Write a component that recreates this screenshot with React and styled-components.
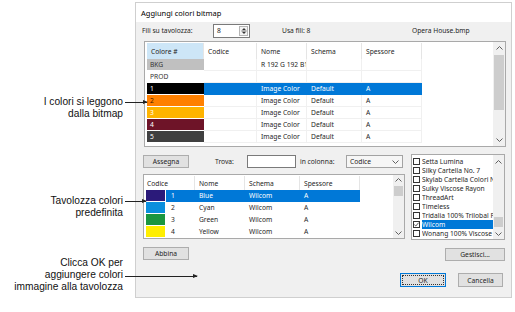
import React from 'react'
import styled, { createGlobalStyle, css } from 'styled-components'

const GlobalStyle = createGlobalStyle`
  html, body { margin: 0; padding: 0; background: #fff; }
  body { font-family: "Noto Sans", "Open Sans", sans-serif; color: #1e1e1e; }
  * { box-sizing: border-box; }
`

const bitmapRows = [
  { key: 'BKG', swatch: '#c0c0c0', ink: '#333', nome: 'R 192 G 192 B192' },
  { key: 'PROD', swatch: '#fff', ink: '#333' },
  { key: '1', swatch: '#000', ink: '#fff', nome: 'Image Color', schema: 'Default', spessore: 'A', selected: true },
  { key: '2', swatch: '#ff8000', ink: '#3a1c00', nome: 'Image Color', schema: 'Default', spessore: 'A' },
  { key: '3', swatch: '#ffb400', ink: '#fff', nome: 'Image Color', schema: 'Default', spessore: 'A' },
  { key: '4', swatch: '#6e1428', ink: '#fff', nome: 'Image Color', schema: 'Default', spessore: 'A' },
  { key: '5', swatch: '#404040', ink: '#fff', nome: 'Image Color', schema: 'Default', spessore: 'A' },
]

const paletteRows = [
  { code: '1', swatch: '#2b1a7a', nome: 'Blue', selected: true },
  { code: '2', swatch: '#0a8fdd', nome: 'Cyan' },
  { code: '3', swatch: '#1a9640', nome: 'Green' },
  { code: '4', swatch: '#ffee00', nome: 'Yellow' },
]

const threadCharts = [
  'Setta Lumina',
  'Silky Cartella No. 7',
  'Skylab Cartella Colori N\u00b0 1',
  'Sulky Viscose Rayon',
  'ThreadArt',
  'Timeless',
  'Tridalia 100% Trilobal Polyester',
  'Wilcom',
  'Wonang 100% Viscose (Rayon)',
]

const UPPER_COLS = '57px 53px 50px 55px 60px 1fr'
const LOWER_COLS = '20px 29px 50px 55px 60px 1fr'

const Chevron = ({ down }) => (
  <svg width="7" height="4" viewBox="0 0 7 4">
    <polyline
      points={down ? '0.5,0.5 3.5,3.5 6.5,0.5' : '0.5,3.5 3.5,0.5 6.5,3.5'}
      fill="none"
      stroke="#606060"
      strokeWidth="1"
    />
  </svg>
)

const Scrollbar = ({ w, btn, top, h }) => (
  <ScrollTrack $w={w}>
    <ScrollButton $h={btn}><Chevron /></ScrollButton>
    <Thumb $w={w - 2} $top={top} $h={h} />
    <ScrollButton $h={btn} $push><Chevron down /></ScrollButton>
  </ScrollTrack>
)

const App = () => {
  return (
    <>
      <GlobalStyle />
      <Page>
        <NoteColumn>
          <Note $top={94}>
            I colori si leggono<br />dalla bitmap
            <Leader $y={6} $len={22} />
          </Note>
          <Note $top={75}>
            Tavolozza colori<br />predefinita
            <Leader $y={6} $len={21} />
          </Note>
          <Note $top={38}>
            Clicca OK per<br />aggiungere colori<br />immagine alla tavolozza
            <Leader $y={19} $len={72} />
          </Note>
        </NoteColumn>

        <Dialog>
          <TitleBar>Aggiungi colori bitmap</TitleBar>
          <Body>
            <TopRow>
              <Label $w={71}>Fili su tavolozza:</Label>
              <Spin>
                <SpinValue>8</SpinValue>
                <SpinButtons>
                  <svg width="7" height="9" viewBox="0 0 7 9">
                    <polygon points="1,3.5 3.5,1 6,3.5" fill="#333" />
                    <line x1="0" y1="4.5" x2="7" y2="4.5" stroke="#999" />
                    <polygon points="1,5.5 3.5,8 6,5.5" fill="#333" />
                  </svg>
                </SpinButtons>
              </Spin>
              <Label $w={130} $ml={32}>Usa fili: 8</Label>
              <Label>Opera House.bmp</Label>
            </TopRow>

            <TableBox $h={106} $m="3px 0 0 2px">
              <TableGrid>
                <GridRow $cols={UPPER_COLS} $h={16}>
                  <HeadCell $active>Colore #</HeadCell>
                  <HeadCell>Codice</HeadCell>
                  <HeadCell>Nome</HeadCell>
                  <HeadCell>Schema</HeadCell>
                  <HeadCell>Spessore</HeadCell>
                  <HeadCell $plain />
                </GridRow>
                {bitmapRows.map((r) => (
                  <GridRow key={r.key} $cols={UPPER_COLS} $h={12}>
                    <Swatch $color={r.swatch} $ink={r.ink}>{r.key}</Swatch>
                    <Cell $sel={r.selected} />
                    <Cell $sel={r.selected}>{r.nome}</Cell>
                    <Cell $sel={r.selected}>{r.schema}</Cell>
                    <Cell $sel={r.selected}>{r.spessore}</Cell>
                    <Filler />
                  </GridRow>
                ))}
              </TableGrid>
              <Scrollbar w={12} btn={12} top={1} h={55} />
            </TableBox>

            <Lower>
              <Column>
                <Toolbar>
                  <Button $w={46}>Assegna</Button>
                  <Label $w={32} $ml={26}>Trova:</Label>
                  <TextInput />
                  <Label $w={46} $ml={4}>in colonna:</Label>
                  <Select>
                    <span>Codice</span>
                    <Chevron down />
                  </Select>
                </Toolbar>

                <TableBox $h={65} $m="6px 0 0 0">
                  <TableGrid>
                    <GridRow $cols={LOWER_COLS} $h={14}>
                      <HeadCell $span={2} $pad={1}>Codice</HeadCell>
                      <HeadCell>Nome</HeadCell>
                      <HeadCell>Schema</HeadCell>
                      <HeadCell>Spessore</HeadCell>
                      <HeadCell $plain />
                    </GridRow>
                    {paletteRows.map((r) => (
                      <GridRow key={r.code} $cols={LOWER_COLS} $h={12}>
                        <Swatch $color={r.swatch} $gap={1} />
                        <Cell $sel={r.selected} $pad={5} $clean>{r.code}</Cell>
                        <Cell $sel={r.selected} $clean>{r.nome}</Cell>
                        <Cell $sel={r.selected} $clean>Wilcom</Cell>
                        <Cell $sel={r.selected} $clean>A</Cell>
                        <Filler />
                      </GridRow>
                    ))}
                  </TableGrid>
                  <Scrollbar w={11} btn={10} top={1} h={10} />
                </TableBox>

                <Button $w={46} $mt={8}>Abbina</Button>
              </Column>

              <Column>
                <ListBox>
                  <ListItems>
                    {threadCharts.map((name) => {
                      const on = name === 'Wilcom'
                      return (
                        <ListItem key={name}>
                          <Check>
                            {on && (
                              <svg width="5" height="5" viewBox="0 0 5 5">
                                <polyline points="0.3,2.6 1.8,4 4.7,0.6" fill="none" stroke="#444" strokeWidth="0.9" />
                              </svg>
                            )}
                          </Check>
                          <ItemText $sel={on}>{name}</ItemText>
                        </ListItem>
                      )
                    })}
                  </ListItems>
                  <Scrollbar w={11} btn={13} top={49} h={10} />
                </ListBox>
                <Button $w={60} $mt={8} $end>Gestisci...</Button>
              </Column>
            </Lower>

            <Actions>
              <Button $w={46} $h={14} $default>OK</Button>
              <Button $w={45} $h={14}>Cancella</Button>
            </Actions>
          </Body>
        </Dialog>
      </Page>
    </>
  )
}

export default App

const Page = styled.div`
  display: flex;
  align-items: flex-start;
  width: 515px;
  height: 312px;
  padding-top: 2px;
  overflow: hidden;
`

const NoteColumn = styled.div`
  width: 135px;
  flex: none;
  position: relative;
  z-index: 1;
  display: flex;
  flex-direction: column;
`

const Note = styled.div`
  position: relative;
  width: 123px;
  margin-top: ${(p) => p.$top}px;
  text-align: right;
  font-family: "Liberation Sans", Arial, sans-serif;
  font-size: 10.2px;
  line-height: 12px;
  color: #111;
  white-space: nowrap;
`

const Leader = styled.span`
  position: absolute;
  left: 125px;
  top: ${(p) => p.$y}px;
  width: ${(p) => p.$len}px;
  height: 1px;
  background: #222;
  &::after {
    content: '';
    position: absolute;
    right: -1px;
    top: -2px;
    border-left: 5px solid #222;
    border-top: 2.5px solid transparent;
    border-bottom: 2.5px solid transparent;
  }
`

const Dialog = styled.div`
  width: 377px;
  height: 296px;
  flex: none;
  border: 1px solid #cfcfcf;
  background: #f0f0f0;
  display: flex;
  flex-direction: column;
`

const TitleBar = styled.div`
  height: 19px;
  flex: none;
  background: #fff;
  padding-left: 5px;
  display: flex;
  align-items: center;
  font-size: 7.5px;
  color: #000;
`

const Body = styled.div`
  flex: 1;
  padding: 0 5px 0 6px;
  display: flex;
  flex-direction: column;
  font-size: 6.7px;
`

const TopRow = styled.div`
  display: flex;
  align-items: center;
  height: 15px;
  margin-top: 1px;
`

const Label = styled.span`
  flex: none;
  width: ${(p) => (p.$w ? `${p.$w}px` : 'auto')};
  margin-left: ${(p) => p.$ml || 0}px;
  white-space: nowrap;
  font-size: 6.7px;
`

const Spin = styled.div`
  display: flex;
  width: 37px;
  height: 14px;
  flex: none;
  border: 1px solid #7a7a7a;
  background: #fff;
`

const SpinValue = styled.span`
  flex: 1;
  padding-left: 3px;
  line-height: 12px;
  font-size: 6.7px;
`

const SpinButtons = styled.div`
  width: 9px;
  margin: 1px 1px 1px 0;
  border: 1px solid #b5b5b5;
  background: #f4f4f4;
  display: flex;
  align-items: center;
  justify-content: center;
  svg { width: 6px; height: 8px; }
`

const TableBox = styled.div`
  display: flex;
  flex: none;
  height: ${(p) => p.$h}px;
  margin: ${(p) => p.$m};
  border: 1px solid #a9a9a9;
  background: #fff;
`

const TableGrid = styled.div`
  flex: 1;
  min-width: 0;
  padding: 1px 0 0 2px;
  display: flex;
  flex-direction: column;
  overflow: hidden;
`

const GridRow = styled.div`
  display: grid;
  grid-template-columns: ${(p) => p.$cols};
  height: ${(p) => p.$h}px;
  flex: none;
`

const HeadCell = styled.div`
  grid-column: span ${(p) => p.$span || 1};
  padding-left: ${(p) => p.$pad ?? 4}px;
  display: flex;
  align-items: center;
  border-right: ${(p) => (p.$plain ? 'none' : '1px solid #e5e5e5')};
  background: ${(p) => (p.$active ? '#cde6f7' : '#fff')};
  font-size: 6.7px;
  white-space: nowrap;
  overflow: hidden;
`

const Swatch = styled.div`
  background: ${(p) => p.$color};
  color: ${(p) => p.$ink || '#fff'};
  border-bottom: 1px solid #fff;
  margin-right: ${(p) => p.$gap || 0}px;
  padding-left: 3px;
  line-height: 11px;
  font-size: 6.7px;
  white-space: nowrap;
`

const Cell = styled.div`
  padding-left: ${(p) => p.$pad ?? 4}px;
  line-height: 11px;
  font-size: 6.7px;
  white-space: nowrap;
  overflow: hidden;
  border-bottom: 1px solid ${(p) => (p.$sel ? '#0078d7' : p.$clean ? '#fff' : '#f0f0f0')};
  border-right: 1px solid ${(p) => (p.$sel ? '#0078d7' : p.$clean ? '#fff' : '#f0f0f0')};
  background: ${(p) => (p.$sel ? '#0078d7' : '#fff')};
  color: ${(p) => (p.$sel ? '#fff' : '#1e1e1e')};
`

const Filler = styled.div`
  background: #fff;
`

const ScrollTrack = styled.div`
  width: ${(p) => p.$w}px;
  flex: none;
  background: #f0f0f0;
  display: flex;
  flex-direction: column;
  align-items: center;
`

const ScrollButton = styled.div`
  height: ${(p) => p.$h}px;
  width: 100%;
  flex: none;
  display: flex;
  align-items: center;
  justify-content: center;
  margin-top: ${(p) => (p.$push ? 'auto' : '0')};
`

const Thumb = styled.div`
  width: ${(p) => p.$w}px;
  height: ${(p) => p.$h}px;
  margin-top: ${(p) => p.$top}px;
  background: #cdcdcd;
  flex: none;
`

const Lower = styled.div`
  display: grid;
  grid-template-columns: 262px 94px;
  column-gap: 6px;
  margin: 7px 0 0 1px;
`

const Column = styled.div`
  display: flex;
  flex-direction: column;
`

const Toolbar = styled.div`
  display: flex;
  align-items: center;
  height: 13px;
  margin-top: 1px;
`

const Button = styled.button`
  position: relative;
  width: ${(p) => p.$w}px;
  height: ${(p) => p.$h || 13}px;
  margin: ${(p) => p.$mt || 0}px 0 0 0;
  align-self: ${(p) => (p.$end ? 'flex-end' : 'flex-start')};
  padding: 0;
  flex: none;
  font-family: "Noto Sans", "Open Sans", sans-serif;
  font-size: 6.7px;
  color: #1e1e1e;
  background: #e1e1e1;
  border: 1px solid ${(p) => (p.$default ? '#0078d7' : '#adadad')};
  ${(p) =>
    p.$default &&
    css`
      &::after {
        content: '';
        position: absolute;
        inset: 1px;
        border: 1px dotted #333;
      }
    `}
`

const TextInput = styled.div`
  width: 49px;
  height: 13px;
  flex: none;
  border: 1px solid #7a7a7a;
  background: #fff;
`

const Select = styled.div`
  width: 57px;
  height: 13px;
  flex: none;
  border: 1px solid #a3a3a3;
  background: #f6f6f6;
  display: flex;
  align-items: center;
  justify-content: space-between;
  padding: 0 3px 0 3px;
  font-size: 6.7px;
`

const ListBox = styled.div`
  display: flex;
  height: 86px;
  border: 1px solid #a9a9a9;
  background: #fff;
`

const ListItems = styled.div`
  flex: 1;
  min-width: 0;
  padding: 2px 0 0 1px;
  overflow: hidden;
`

const ListItem = styled.div`
  display: flex;
  align-items: center;
  gap: 2px;
  height: 9px;
`

const Check = styled.span`
  width: 7px;
  height: 7px;
  flex: none;
  border: 1px solid #333;
  background: #fff;
  display: flex;
  align-items: center;
  justify-content: center;
`

const ItemText = styled.span`
  flex: 1;
  min-width: 0;
  height: 9px;
  line-height: 9px;
  font-size: 6.7px;
  white-space: nowrap;
  overflow: hidden;
  background: ${(p) => (p.$sel ? '#0078d7' : 'transparent')};
  color: ${(p) => (p.$sel ? '#fff' : '#1e1e1e')};
`

const Actions = styled.div`
  display: flex;
  justify-content: flex-end;
  gap: 12px;
  margin-top: 12px;
  padding-right: 3px;
`
